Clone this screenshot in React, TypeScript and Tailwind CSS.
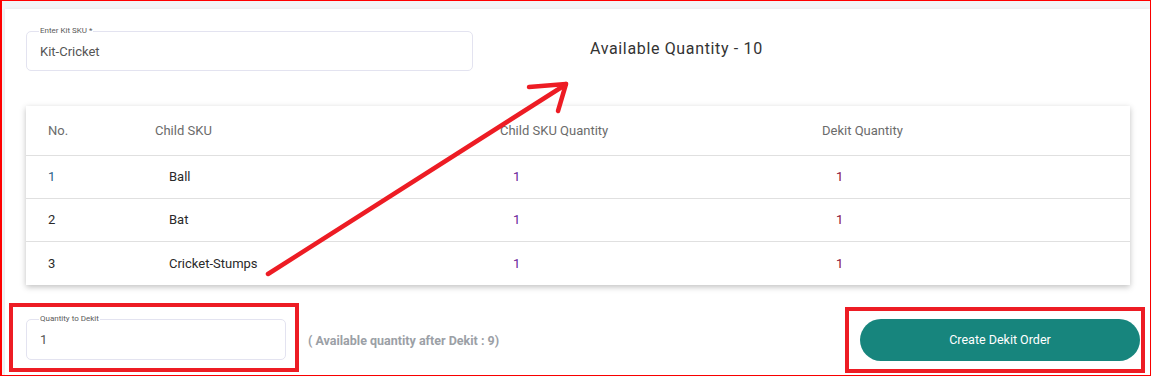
import React from "react";

const rows = [
  { no: "1", sku: "Ball", noColor: "text-[#2b5f8a]" },
  { no: "2", sku: "Bat", noColor: "text-[#2a2a2a]" },
  { no: "3", sku: "Cricket-Stumps", noColor: "text-[#2a2a2a]" },
];

function Field({ label, value, className }: { label: string; value: string; className: string }) {
  return (
    <div className={`relative rounded-[5px] border border-[#e3e3f0] ${className}`}>
      <span className="absolute left-[12px] top-[-6px] bg-white px-[1px] text-[8px] leading-[10px] text-[#5a5a5a]">
        {label}
      </span>
      <div className="flex h-full items-center pl-[13px] pt-[1px] text-[13px] text-[#555]">{value}</div>
    </div>
  );
}

export default function App() {
  return (
    <div className="relative h-[377px] w-[1152px] overflow-hidden bg-white" style={{ fontFamily: "Roboto, 'Liberation Sans', sans-serif" }}>
      <div className="h-[376px] w-[1151px] border-b border-l-2 border-r border-t border-[#ff0000]">
        <div className="h-full bg-[#f3f4f6] pl-[3px] pt-[8px]">
          <div className="h-full bg-white pl-[21px] pt-[22px] shadow-[0_0_4px_rgba(0,0,0,0.06)]">
            <div className="flex items-start">
              <Field label="Enter Kit SKU *" value="Kit-Cricket" className="h-[40px] w-[447px]" />
              <div className="ml-[117px] mt-[6px] text-[16px] font-normal tracking-[0.65px] text-[#333]">
                Available Quantity - 10
              </div>
            </div>

            <div className="mt-[35px] w-[1104px] bg-white shadow-[0_2px_6px_rgba(0,0,0,0.25)]">
              <div className="flex h-[50px] items-center border-b border-[#e0e0e0] text-[13px] text-[#6b6b6b]">
                <div className="w-[129px] pl-[22px]">No.</div>
                <div className="w-[345px]">Child SKU</div>
                <div className="w-[322px]">Child SKU Quantity</div>
                <div>Dekit Quantity</div>
              </div>
              {rows.map((r, i) => (
                <div
                  key={r.no}
                  className={`flex h-[43px] items-center text-[13px] ${i < 2 ? "border-b border-[#e0e0e0]" : ""}`}
                >
                  <div className={`w-[129px] pl-[22px] ${r.noColor}`}>{r.no}</div>
                  <div className="w-[345px] pl-[14px] text-[#2a2a2a]">{r.sku}</div>
                  <div className="w-[322px] pl-[13px] text-[#6a1b9a]">1</div>
                  <div className="pl-[14px] text-[#8b1040]">1</div>
                </div>
              ))}
            </div>

            <div className="mt-[34px] flex items-start">
              <Field label="Quantity to Dekit" value="1" className="h-[41px] w-[260px]" />
              <div className="ml-[22px] mt-[13px] text-[12.5px] font-bold text-[#9ba0a6]">
                ( Available quantity after Dekit : 9)
              </div>
              <button className="ml-auto mr-[10px] h-[42px] w-[280px] rounded-full bg-[#17857d] text-[12.5px] font-normal text-white">
                Create Dekit Order
              </button>
            </div>
          </div>
        </div>
      </div>

      {/* annotations */}
      <div className="absolute left-[9px] top-[303px] h-[69px] w-[290px] border-4 border-[#ed1c24]" />
      <div className="absolute left-[845px] top-[307px] h-[66px] w-[300px] border-4 border-[#ed1c24]" />
      <svg className="pointer-events-none absolute left-0 top-0" width="1152" height="377">
        <g stroke="#ed1c24" strokeWidth="4.5" strokeLinecap="round" fill="none">
          <line x1="268" y1="274" x2="565" y2="85" />
          <line x1="529" y1="87" x2="566" y2="84" />
          <line x1="558" y1="111" x2="566" y2="84" />
        </g>
      </svg>
    </div>
  );
}
